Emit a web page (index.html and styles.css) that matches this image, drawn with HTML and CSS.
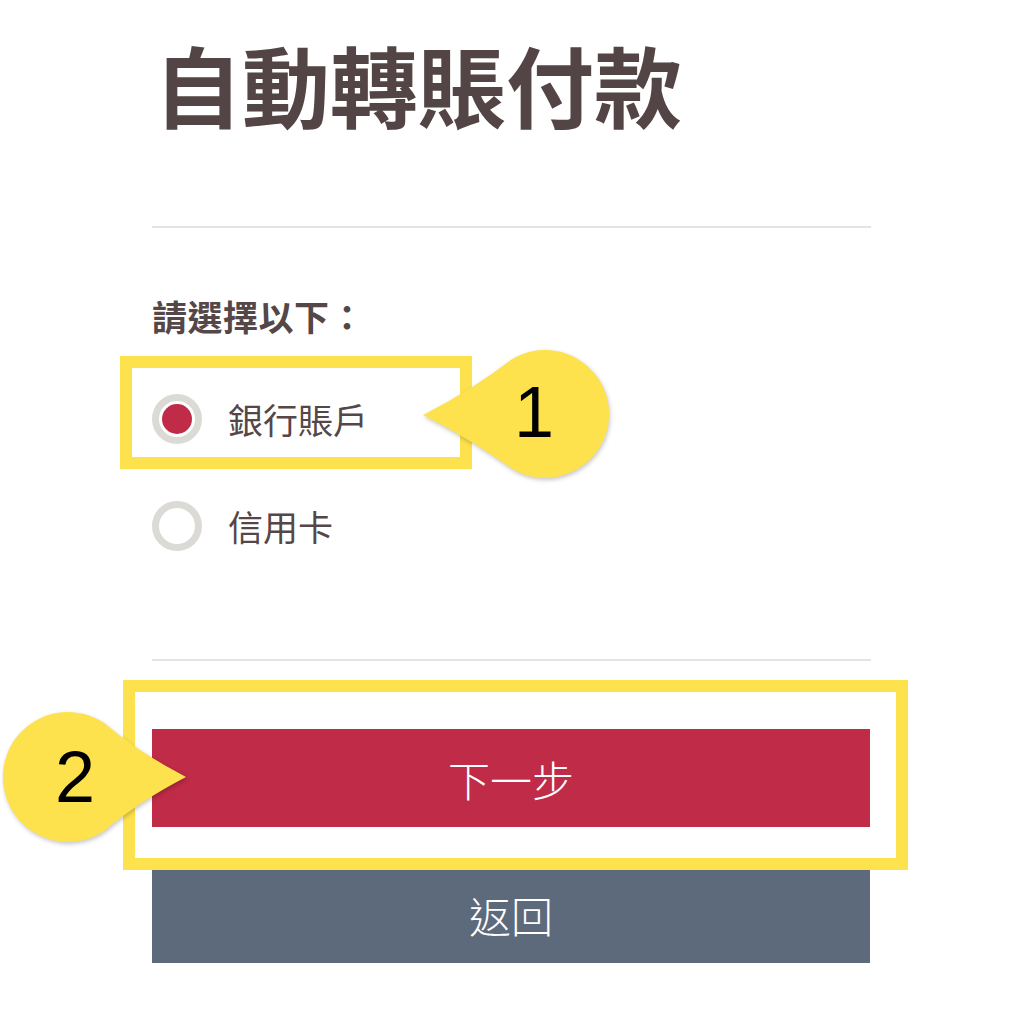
FILE: index.html
```html
<!DOCTYPE html>
<html lang="zh-Hant">
<head>
<meta charset="utf-8">
<title>自動轉賬付款</title>
<link rel="stylesheet" href="styles.css">
</head>
<body>
<main class="page">
  <h1 class="title">自動轉賬付款</h1>
  <hr class="divider">
  <p class="prompt">請選擇以下：</p>
  <div class="options">
    <label class="option"><span class="radio radio-checked"></span><span class="option-label">銀行賬戶</span></label>
    <label class="option"><span class="radio"></span><span class="option-label">信用卡</span></label>
  </div>
  <hr class="divider divider-bottom">
  <div class="actions">
    <button class="btn btn-primary" type="button">下一步</button>
    <button class="btn btn-secondary" type="button">返回</button>
  </div>
</main>

<div class="highlight highlight-one"></div>
<div class="highlight highlight-two"></div>

<svg class="callout callout-one" width="192" height="136" viewBox="0 0 192 136">
  <path d="M 3 69 Q 52 44 91.5 13.5 A 64 64 0 1 1 91.5 122.5 Q 52 94 3 69 Z" fill="#fde24e"/>
</svg>
<div class="callout-num callout-num-one">1</div>

<svg class="callout callout-two" width="192" height="136" viewBox="0 0 192 136">
  <path d="M 186 67 Q 138 42 104.1 13 A 65 65 0 1 0 104.1 121 Q 138 92 186 67 Z" fill="#fde24e"/>
</svg>
<div class="callout-num callout-num-two">2</div>
</body>
</html>
```

FILE: styles.css
```css
html, body {
  margin: 0;
  padding: 0;
  background: #ffffff;
}

body {
  width: 1021px;
  height: 1024px;
  position: relative;
  overflow: hidden;
  font-family: "Noto Sans CJK TC", "Noto Sans", sans-serif;
  color: #554747;
}

.page {
  width: 718px;
  margin-left: 152px;
  padding-top: 31px;
  display: flex;
  flex-direction: column;
}

.title {
  margin: 0;
  font-size: 88px;
  line-height: 104px;
  font-weight: 700;
  color: #534545;
  padding-left: 2px;
  letter-spacing: 0;
}

.divider {
  margin: 91px 0 0 0;
  border: 0;
  height: 2px;
  background: #e4e4e1;
  width: 719px;
}

.prompt {
  margin: 68px 0 0 0;
  font-size: 35px;
  line-height: 40px;
  font-weight: 700;
  color: #554747;
  letter-spacing: 0.5px;
}

.options {
  margin-top: 53px;
  display: flex;
  flex-direction: column;
  gap: 47px;
}

.option {
  display: flex;
  align-items: center;
  height: 60px;
  gap: 26px;
}

.radio {
  width: 50px;
  height: 50px;
  box-sizing: border-box;
  border-radius: 50%;
  border: 7px solid #dbdad5;
  background: #ffffff;
  display: flex;
  align-items: center;
  justify-content: center;
  flex: none;
}

.radio-checked::after {
  content: "";
  width: 30px;
  height: 30px;
  border-radius: 50%;
  background: #c02b47;
}

.option-label {
  font-size: 35px;
  line-height: 60px;
  color: #554747;
  font-weight: 400;
}

.divider-bottom {
  margin-top: 103px;
}

.actions {
  margin-top: 68px;
  display: flex;
  flex-direction: column;
  gap: 38px;
}

.btn {
  display: flex;
  align-items: center;
  justify-content: center;
  width: 718px;
  height: 98px;
  border: 0;
  padding: 0;
  margin: 0;
  font-family: "Noto Sans CJK TC", "Noto Sans", sans-serif;
  font-size: 42px;
  font-weight: 300;
  color: #ffffff;
}

.btn-primary {
  background: #c02b47;
}

.btn-secondary {
  background: #5d6a7c;
}

.highlight {
  position: absolute;
  box-sizing: border-box;
  border: 12px solid #fde24e;
}

.highlight-one {
  left: 120px;
  top: 356px;
  width: 352px;
  height: 113px;
}

.highlight-two {
  left: 123px;
  top: 680px;
  width: 785px;
  height: 190px;
}

.callout {
  position: absolute;
  filter: drop-shadow(1px 2px 2px rgba(0, 0, 0, 0.22));
}

.callout-one {
  left: 420px;
  top: 346px;
}

.callout-two {
  left: 0;
  top: 710px;
}

.callout-num {
  position: absolute;
  font-family: "Liberation Sans", Arial, sans-serif;
  font-size: 72px;
  line-height: 72px;
  color: #000000;
  width: 80px;
  text-align: center;
}

.callout-num-one {
  left: 494px;
  top: 376px;
}

.callout-num-two {
  left: 35px;
  top: 741px;
}
```
